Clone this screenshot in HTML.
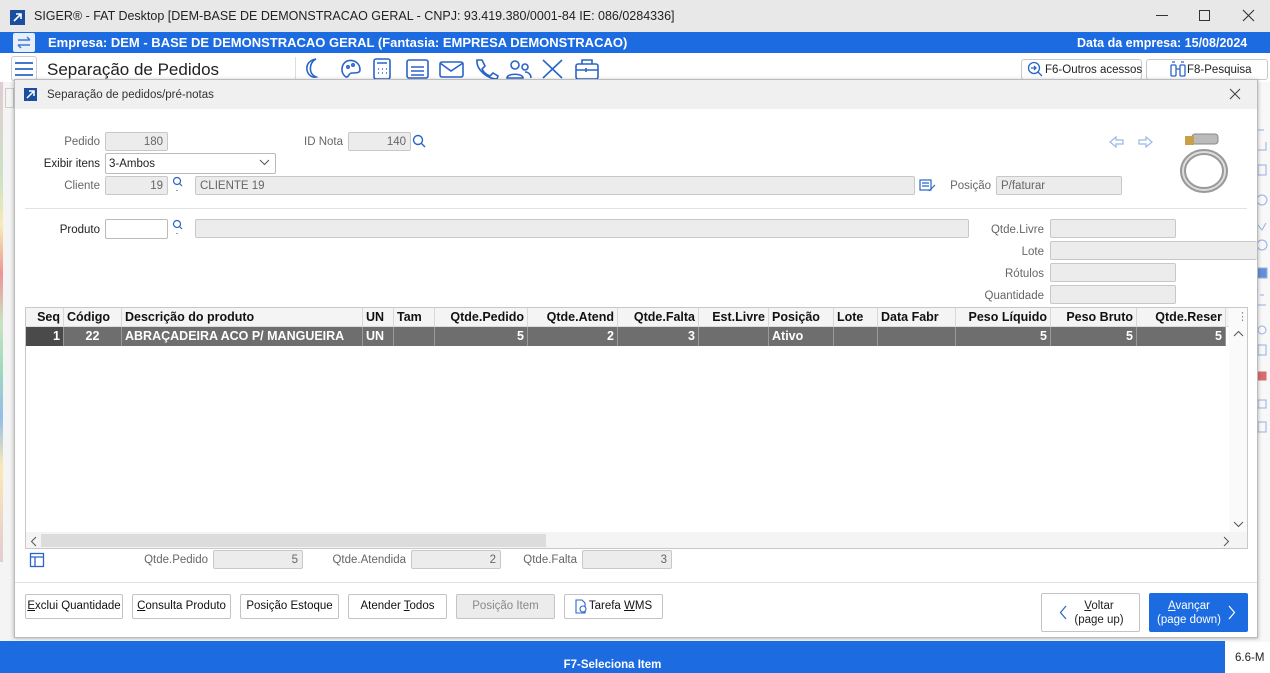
<!DOCTYPE html>
<html><head><meta charset="utf-8">
<style>
*{box-sizing:border-box;margin:0;padding:0}
body{width:1270px;height:673px;overflow:hidden;position:relative;background:#fff;font-family:"Liberation Sans",sans-serif;font-size:12px;color:#222}
.a{position:absolute}
.lbl{position:absolute;font-size:11.5px;color:#666;text-align:right}
.inp{position:absolute;height:19px;background:#ececec;border:1px solid #c8c8c8;border-radius:2px;font-size:11.5px;color:#666;padding:3px 4px 0;white-space:nowrap}
.r{text-align:right}
.btn{position:absolute;top:594px;height:25px;border:1px solid #c4c4c4;border-radius:2px;background:#fff;font-size:11.5px;text-align:center;line-height:23px;color:#111}
.th{position:absolute;top:0;height:19px;line-height:19px;font-weight:bold;font-size:12.5px;border-right:1px solid #d8d8d8;padding:0 3px;white-space:nowrap;overflow:hidden;color:#111}
.td{position:absolute;top:19px;height:19px;line-height:19px;font-weight:bold;font-size:12.5px;color:#fff;border-right:1px solid #999;padding:0 3px;white-space:nowrap;overflow:hidden;background:#6e6e6e}
</style></head><body>
<div class="a" style="left:0;top:0;width:1270px;height:32px;background:#e8e8e8"></div>
<div class="a" style="left:10px;top:10px;width:15px;height:15px;background:#1a4fa0"></div>
<svg class="a" style="left:10px;top:10px" width="15" height="15"><path d="M4 11L11 4M6 4H11V9" stroke="#fff" stroke-width="1.6" fill="none"/></svg>
<div class="a" style="left:34px;top:9px;font-size:12.5px;color:#222">SIGER® - FAT Desktop [DEM-BASE DE DEMONSTRACAO GERAL - CNPJ: 93.419.380/0001-84 IE: 086/0284336]</div>
<div class="a" style="left:1156px;top:15px;width:12px;height:1px;background:#333"></div>
<div class="a" style="left:1199px;top:10px;width:11px;height:11px;border:1px solid #333"></div>
<svg class="a" style="left:1242px;top:9px" width="13" height="13"><path d="M1 1L12 12M12 1L1 12" stroke="#333" stroke-width="1.1"/></svg>
<div class="a" style="left:0;top:32px;width:1270px;height:21px;background:#1c6be0"></div>
<div class="a" style="left:13px;top:33px;width:22px;height:19px;background:#e8eef8;border-radius:2px"></div>
<svg class="a" style="left:13px;top:33px" width="22" height="19"><path d="M5 7H17M14 4L17 7M17 12H5M8 15L5 12" stroke="#3a78d8" stroke-width="1.5" fill="none"/></svg>
<div class="a" style="left:48px;top:35px;font-weight:bold;color:#fff;font-size:13px">Empresa: DEM - BASE DE DEMONSTRACAO GERAL (Fantasia: EMPRESA DEMONSTRACAO)</div>
<div class="a" style="left:1077px;top:36px;font-weight:bold;color:#fff;font-size:12.5px">Data da empresa: 15/08/2024</div>
<div class="a" style="left:11px;top:56px;width:26px;height:25px;border:1px solid #ccc;border-radius:3px"></div>
<svg class="a" style="left:13px;top:58px" width="22" height="22"><path d="M2 5H20M2 11H20M2 17H20" stroke="#2a64c8" stroke-width="1.7"/></svg>
<div class="a" style="left:47px;top:60px;font-size:17px;color:#222">Separação de Pedidos</div>
<div class="a" style="left:295px;top:57px;width:1px;height:22px;background:#ddd"></div>
<svg class="a" style="left:300px;top:56px" width="310" height="26" fill="none" stroke="#2a64c8" stroke-width="1.6">
<path d="M16 3C9 6 8 18 16 21C12 22 8 19 7 14C6 8 10 4 16 3Z"/>
<path d="M60 14C60 7 54 3 47 5C41 8 40 17 46 21C49 22 48 17 52 17C56 17 60 17 60 14Z"/><circle cx="48" cy="11" r="1.2"/><circle cx="53" cy="9" r="1.2"/>
<rect x="74" y="3" width="16" height="20" rx="2"/><path d="M77 7H87M78 13H79M82 13H83M86 13H87M78 17H79M82 17H83M86 17H87"/>
<rect x="107" y="4" width="21" height="18" rx="2"/><path d="M111 11H124M111 15H124M111 19H124"/>
<rect x="140" y="6" width="23" height="15" rx="2"/><path d="M140 7L151 15L163 7"/>
<path d="M177 4L182 4L185 10L182 13C184 17 187 19 190 20L193 17L198 20L197 23C188 23 176 14 177 4Z"/>
<circle cx="215" cy="9" r="4"/><path d="M207 22C207 17 223 17 223 22Z"/><circle cx="225" cy="11" r="3"/><path d="M225 16C229 16 231 19 231 22"/>
<path d="M243 4L262 22M262 4L243 22"/>
<rect x="276" y="8" width="22" height="15" rx="2"/><path d="M282 8V4H292V8M276 14H298M286 12V16"/>
</svg>
<div class="a" style="left:1021px;top:59px;width:121px;height:21px;border:1px solid #c8c8c8;border-radius:3px"></div>
<svg class="a" style="left:1027px;top:61px" width="16" height="16" fill="none" stroke="#2a64c8" stroke-width="1.3"><circle cx="7" cy="7" r="5.5"/><path d="M11 11L15 15M4 7H9M7 5L9 7L7 9"/></svg>
<div class="a" style="left:1045px;top:64px;font-size:11.5px">F6-Outros acessos</div>
<div class="a" style="left:1146px;top:59px;width:122px;height:21px;border:1px solid #c8c8c8;border-radius:3px"></div>
<svg class="a" style="left:1170px;top:61px" width="16" height="16" fill="none" stroke="#2a64c8" stroke-width="1.3"><rect x="1" y="4" width="5" height="11" rx="1"/><rect x="10" y="4" width="5" height="11" rx="1"/><path d="M6 8H10M2 1H5M11 1H14"/></svg>
<div class="a" style="left:1187px;top:64px;font-size:11.5px">F8-Pesquisa</div>
<div class="a" style="left:0;top:82px;width:14px;height:560px;background:#f4f4f4"></div>
<div class="a" style="left:0;top:82px;width:3px;height:480px;opacity:.45;background:linear-gradient(#c9a 0,#9c8 20%,#fd6 30%,#d22 40%,#9c8 50%,#3b7 60%,#27d 70%,#fd6 80%,#c9a 100%)"></div>
<div class="a" style="left:5px;top:88px;width:9px;height:20px;border:1px solid #ccc"></div>
<div class="a" style="left:1257px;top:82px;width:13px;height:560px;background:#f8f8f8"></div>
<svg class="a" style="left:1256px;top:110px" width="14" height="330" fill="none" stroke="#6a94da" stroke-width="1" opacity=".7">
<path d="M2 20H8M2 40h8v-8"/><rect x="2" y="55" width="8" height="10"/><circle cx="6" cy="90" r="5"/><path d="M2 115L6 120L10 113"/><circle cx="6" cy="135" r="5"/><rect x="1" y="158" width="10" height="10" fill="#2a64c8"/><path d="M2 195h8M4 185h4"/><circle cx="6" cy="220" r="4"/><rect x="2" y="235" width="8" height="10"/><rect x="2" y="262" width="8" height="8" fill="#c33" stroke="#c33"/><rect x="2" y="290" width="8" height="8"/><rect x="2" y="312" width="8" height="10"/>
</svg>
<div class="a" style="left:14px;top:79px;width:1244px;height:559px;background:#fff;border:1px solid #bbb;box-shadow:0 1px 4px rgba(0,0,0,.3)"></div>
<div class="a" style="left:15px;top:80px;width:1242px;height:29px;background:#f0f0f0"></div>
<div class="a" style="left:24px;top:88px;width:13px;height:13px;background:#1a4fa0"></div>
<svg class="a" style="left:24px;top:88px" width="13" height="13"><path d="M3 10L10 3M5 3H10V8" stroke="#fff" stroke-width="1.5" fill="none"/></svg>
<div class="a" style="left:47px;top:89px;font-size:11.5px;color:#333">Separação de pedidos/pré-notas</div>
<svg class="a" style="left:1229px;top:88px" width="12" height="12"><path d="M1 1L11 11M11 1L1 11" stroke="#444" stroke-width="1.1"/></svg>
<div class="lbl" style="left:40px;top:136px;width:60px">Pedido</div>
<div class="inp r" style="left:105px;top:132px;width:63px">180</div>
<div class="lbl" style="left:280px;top:136px;width:63px">ID Nota</div>
<div class="inp r" style="left:348px;top:132px;width:63px">140</div>
<svg class="a" style="left:412px;top:134px" width="15" height="15" fill="none" stroke="#2a64c8" stroke-width="1.4"><circle cx="6" cy="6" r="4.5"/><path d="M9.5 9.5L13 13"/></svg>
<div class="lbl" style="left:30px;top:158px;width:70px;color:#222">Exibir itens</div>
<div class="a" style="left:105px;top:153px;width:171px;height:21px;border:1px solid #bbb;border-radius:2px;font-size:11.5px;padding:4px 3px 0;color:#222">3-Ambos</div>
<svg class="a" style="left:259px;top:159px" width="11" height="7"><path d="M1 1L5.5 5.5L10 1" stroke="#555" fill="none"/></svg>
<div class="lbl" style="left:40px;top:180px;width:60px">Cliente</div>
<div class="inp r" style="left:105px;top:176px;width:63px">19</div>
<svg class="a" style="left:172px;top:176px" width="12" height="16" fill="none" stroke="#2a64c8" stroke-width="1.2"><circle cx="5" cy="5" r="3.5"/><path d="M7.5 7.5L10 10M5 14V15"/></svg>
<div class="inp" style="left:195px;top:176px;width:720px">CLIENTE 19</div>
<svg class="a" style="left:919px;top:178px" width="17" height="15" fill="none" stroke="#2a64c8" stroke-width="1.2"><rect x="1" y="2" width="11" height="10"/><path d="M3 5H10M3 8H10M10 13L16 7"/></svg>
<div class="lbl" style="left:945px;top:180px;width:46px">Posição</div>
<div class="inp" style="left:996px;top:176px;width:126px">P/faturar</div>
<svg class="a" style="left:1108px;top:134px" width="46" height="16" fill="none" stroke="#9ab8e8" stroke-width="1.2"><path d="M2 8L8 3V6H15V10H8V13Z"/><path d="M44 8L38 3V6H31V10H38V13Z"/></svg>
<svg class="a" style="left:1170px;top:128px" width="66" height="66"><ellipse cx="34" cy="43" rx="21" ry="19" fill="none" stroke="#999" stroke-width="6"/><ellipse cx="34" cy="43" rx="21" ry="19" fill="none" stroke="#ddd" stroke-width="2"/><rect x="22" y="6" width="26" height="10" rx="3" fill="#bbb" stroke="#888"/><rect x="15" y="8" width="9" height="9" fill="#c9a04a"/></svg>
<div class="a" style="left:25px;top:208px;width:1222px;height:1px;background:#e2e2e2"></div>
<div class="lbl" style="left:40px;top:224px;width:60px;color:#222">Produto</div>
<div class="a" style="left:105px;top:219px;width:63px;height:20px;border:1px solid #bbb;border-radius:2px"></div>
<svg class="a" style="left:172px;top:219px" width="12" height="16" fill="none" stroke="#2a64c8" stroke-width="1.2"><circle cx="5" cy="5" r="3.5"/><path d="M7.5 7.5L10 10M5 14V15"/></svg>
<div class="inp" style="left:195px;top:219px;width:774px"></div>
<div class="lbl" style="left:960px;top:224px;width:84px">Qtde.Livre</div>
<div class="inp" style="left:1050px;top:219px;width:126px"></div>
<div class="lbl" style="left:960px;top:246px;width:84px">Lote</div>
<div class="inp" style="left:1050px;top:241px;width:207px;border-right:none"></div>
<div class="lbl" style="left:960px;top:268px;width:84px">Rótulos</div>
<div class="inp" style="left:1050px;top:263px;width:126px"></div>
<div class="lbl" style="left:960px;top:290px;width:84px">Quantidade</div>
<div class="inp" style="left:1050px;top:285px;width:126px"></div>
<div class="a" style="left:25px;top:307px;width:1223px;height:242px;border:1px solid #c8c8c8;overflow:hidden">
<div class="a" style="left:0;top:0;width:1222px;height:19px;background:#f4f4f4;border-bottom:1px solid #ddd"></div>
<div class="th r" style="left:0;width:38px">Seq</div>
<div class="th" style="left:38px;width:58px">Código</div>
<div class="th" style="left:96px;width:241px">Descrição do produto</div>
<div class="th" style="left:337px;width:31px">UN</div>
<div class="th" style="left:368px;width:41px">Tam</div>
<div class="th r" style="left:409px;width:93px">Qtde.Pedido</div>
<div class="th r" style="left:502px;width:90px">Qtde.Atend</div>
<div class="th r" style="left:592px;width:81px">Qtde.Falta</div>
<div class="th r" style="left:673px;width:70px">Est.Livre</div>
<div class="th" style="left:743px;width:65px">Posição</div>
<div class="th" style="left:808px;width:44px">Lote</div>
<div class="th" style="left:852px;width:78px">Data Fabr</div>
<div class="th r" style="left:930px;width:95px">Peso Líquido</div>
<div class="th r" style="left:1025px;width:86px">Peso Bruto</div>
<div class="th r" style="left:1111px;width:89px">Qtde.Reser</div>
<div class="td r" style="left:0;width:38px;background:#4a4a4a">1</div>
<div class="td r" style="left:38px;width:58px;text-align:center">22</div>
<div class="td" style="left:96px;width:241px">ABRAÇADEIRA ACO P/ MANGUEIRA</div>
<div class="td" style="left:337px;width:31px">UN</div>
<div class="td" style="left:368px;width:41px"></div>
<div class="td r" style="left:409px;width:93px">5</div>
<div class="td r" style="left:502px;width:90px">2</div>
<div class="td r" style="left:592px;width:81px">3</div>
<div class="td" style="left:673px;width:70px"></div>
<div class="td" style="left:743px;width:65px">Ativo</div>
<div class="td" style="left:808px;width:44px"></div>
<div class="td" style="left:852px;width:78px"></div>
<div class="td r" style="left:930px;width:95px">5</div>
<div class="td r" style="left:1025px;width:86px">5</div>
<div class="td r" style="left:1111px;width:89px">5</div>
<div class="a" style="left:1203px;top:0;width:19px;height:224px;background:#fafafa"></div>
<div class="a" style="left:1211px;top:2px;color:#888;font-size:11px">⋮</div>
<svg class="a" style="left:1207px;top:22px" width="11" height="7"><path d="M1 6L5.5 1.5L10 6" stroke="#555" fill="none"/></svg>
<svg class="a" style="left:1207px;top:213px" width="11" height="7"><path d="M1 1L5.5 5.5L10 1" stroke="#555" fill="none"/></svg>
<div class="a" style="left:0;top:224px;width:1222px;height:17px;background:#f4f4f4"></div>
<div class="a" style="left:15px;top:226px;width:505px;height:13px;background:#dcdcdc"></div>
<svg class="a" style="left:4px;top:228px" width="7" height="11"><path d="M6 1L1.5 5.5L6 10" stroke="#555" fill="none"/></svg>
<svg class="a" style="left:1197px;top:228px" width="7" height="11"><path d="M1 1L5.5 5.5L1 10" stroke="#555" fill="none"/></svg>
</div>
<svg class="a" style="left:29px;top:552px" width="16" height="16" fill="none" stroke="#2a64c8" stroke-width="1.3"><rect x="1.5" y="1.5" width="13" height="13"/><path d="M1.5 5H14.5M6 5V14.5"/></svg>
<div class="lbl" style="left:130px;top:554px;width:78px">Qtde.Pedido</div>
<div class="inp r" style="left:213px;top:550px;width:90px">5</div>
<div class="lbl" style="left:320px;top:554px;width:86px">Qtde.Atendida</div>
<div class="inp r" style="left:411px;top:550px;width:90px">2</div>
<div class="lbl" style="left:510px;top:554px;width:67px">Qtde.Falta</div>
<div class="inp r" style="left:582px;top:550px;width:90px">3</div>
<div class="a" style="left:15px;top:582px;width:1242px;height:1px;background:#e2e2e2"></div>
<div class="btn" style="left:25px;width:98px"><u>E</u>xclui Quantidade</div>
<div class="btn" style="left:132px;width:99px"><u>C</u>onsulta Produto</div>
<div class="btn" style="left:240px;width:99px">Posição Estoque</div>
<div class="btn" style="left:348px;width:99px">Atender <u>T</u>odos</div>
<div class="btn" style="left:456px;width:99px;background:#ececec;color:#888">Posição Item</div>
<div class="btn" style="left:564px;width:99px;padding-left:14px">Tarefa <u>W</u>MS</div>
<svg class="a" style="left:574px;top:599px" width="14" height="15" fill="none" stroke="#2a64c8" stroke-width="1.1"><path d="M2 1H8L11 4V14H2Z"/><circle cx="9" cy="10" r="3" fill="#fff"/></svg>
<div class="a" style="left:1041px;top:593px;width:99px;height:39px;border:1px solid #c4c4c4;border-radius:2px;background:#fff"></div>
<svg class="a" style="left:1059px;top:605px" width="8" height="15"><path d="M7 1L1.5 7.5L7 14" stroke="#2a64c8" fill="none" stroke-width="1.2"/></svg>
<div class="a" style="left:1070px;top:599px;width:58px;text-align:center;font-size:11.5px;line-height:14px"><u>V</u>oltar<br>(page up)</div>
<div class="a" style="left:1149px;top:593px;width:99px;height:39px;background:#1c6be0;border-radius:2px"></div>
<div class="a" style="left:1153px;top:599px;width:72px;text-align:center;font-size:11.5px;line-height:14px;color:#fff"><u>A</u>vançar<br>(page down)</div>
<svg class="a" style="left:1228px;top:605px" width="8" height="15"><path d="M1 1L6.5 7.5L1 14" stroke="#fff" fill="none" stroke-width="1.2"/></svg>
<div class="a" style="left:0;top:641px;width:1225px;height:32px;background:#1c6be0"></div>
<div class="a" style="left:0;top:659px;width:1225px;text-align:center;color:#fff;font-weight:bold;font-size:11.5px">F7-Seleciona Item</div>
<div class="a" style="left:1235px;top:652px;font-size:11.5px;color:#222">6.6-M</div>
</body></html>
